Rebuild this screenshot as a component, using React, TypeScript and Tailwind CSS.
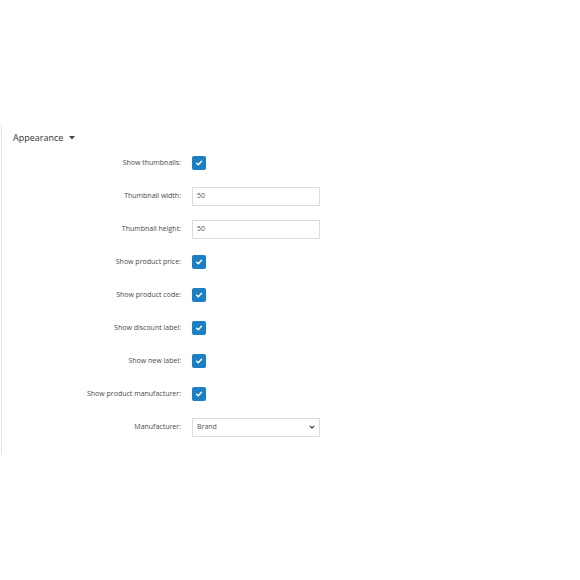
import type { ReactNode } from "react"

type Row =
  | { label: string; kind: "check" }
  | { label: string; kind: "input"; value: string }
  | { label: string; kind: "select"; value: string }

const rows: Row[] = [
  { label: "Show thumbnails:", kind: "check" },
  { label: "Thumbnail width:", kind: "input", value: "50" },
  { label: "Thumbnail height:", kind: "input", value: "50" },
  { label: "Show product price:", kind: "check" },
  { label: "Show product code:", kind: "check" },
  { label: "Show discount label:", kind: "check" },
  { label: "Show new label:", kind: "check" },
  { label: "Show product manufacturer:", kind: "check" },
  { label: "Manufacturer:", kind: "select", value: "Brand" },
]

function Checkbox() {
  return (
    <span className="flex h-[14px] w-[14px] items-center justify-center rounded-[2px] bg-[#1b7fc4]">
      <svg width="8" height="8" viewBox="0 0 10 10" fill="none">
        <path d="M2 5.2 4.1 7.2 8.2 2.9" stroke="white" strokeWidth="1.8" strokeLinecap="round" strokeLinejoin="round" />
      </svg>
    </span>
  )
}

function Field({ children }: { children: ReactNode }) {
  return (
    <div className="flex h-[19px] w-[128px] items-center justify-between border border-[#dcdcdc] bg-white px-[4px] text-[7px] text-[#555]">
      {children}
    </div>
  )
}

export default function App() {
  return (
    <div className="h-[580px] w-[580px] bg-white pt-[125px] font-['Open_Sans',sans-serif]">
      <div className="ml-[1px] h-[329px] border-l border-[#e4e4e4]">
        <div className="flex items-center gap-[6px] pl-[11px] pt-[6px] text-[9px] font-medium text-[#333]">
          <span>Appearance</span>
          <svg width="6" height="4" viewBox="0 0 6 4">
            <path d="M0 0h6L3 3.5z" fill="#444" />
          </svg>
        </div>
        <div className="mt-[2px] flex flex-col">
          {rows.map((row) => (
            <div key={row.label} className="flex h-[33px] items-center">
              <div className="w-[179px] text-right text-[7px] text-[#4a4a4a]">{row.label}</div>
              <div className="ml-[11px]">
                {row.kind === "check" ? (
                  <Checkbox />
                ) : row.kind === "input" ? (
                  <Field>
                    <span>{row.value}</span>
                  </Field>
                ) : (
                  <Field>
                    <span>{row.value}</span>
                    <svg width="6" height="4" viewBox="0 0 6 4" fill="none">
                      <path d="M0.8 0.8 3 3 5.2 0.8" stroke="#333" strokeWidth="1.1" />
                    </svg>
                  </Field>
                )}
              </div>
            </div>
          ))}
        </div>
      </div>
    </div>
  )
}
